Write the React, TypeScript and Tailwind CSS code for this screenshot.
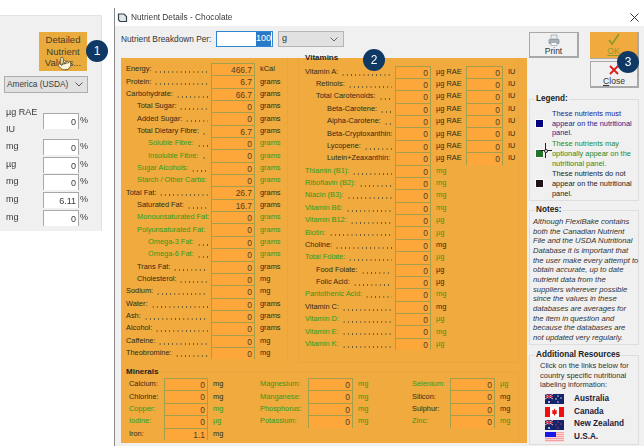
import { Pointer } from "lucide-react";

type Nutrient = { label: string; indent?: 0 | 1 | 2; value?: string; unit: string; green?: boolean };

const MAIN: Nutrient[] = [
  { label: "Energy:", value: "466.7", unit: "kCal" },
  { label: "Protein:", value: "6.7", unit: "grams" },
  { label: "Carbohydrate:", value: "66.7", unit: "grams" },
  { label: "Total Sugar:", indent: 1, unit: "grams" },
  { label: "Added Sugar:", indent: 1, unit: "grams" },
  { label: "Total Dietary Fibre:", indent: 1, value: "6.7", unit: "grams" },
  { label: "Soluble Fibre:", indent: 2, unit: "grams", green: true },
  { label: "Insoluble Fibre:", indent: 2, unit: "grams", green: true },
  { label: "Sugar Alcohols:", indent: 1, unit: "grams", green: true },
  { label: "Starch / Other Carbs:", indent: 1, unit: "grams", green: true },
  { label: "Total Fat:", value: "26.7", unit: "grams" },
  { label: "Saturated Fat:", indent: 1, value: "16.7", unit: "grams" },
  { label: "Monounsaturated Fat:", indent: 1, unit: "grams", green: true },
  { label: "Polyunsaturated Fat:", indent: 1, unit: "grams", green: true },
  { label: "Omega-3 Fat:", indent: 2, unit: "grams", green: true },
  { label: "Omega-6 Fat:", indent: 2, unit: "grams", green: true },
  { label: "Trans Fat:", indent: 1, unit: "grams" },
  { label: "Cholesterol:", indent: 1, unit: "mg" },
  { label: "Sodium:", unit: "mg" },
  { label: "Water:", unit: "grams" },
  { label: "Ash:", unit: "grams" },
  { label: "Alcohol:", unit: "grams" },
  { label: "Caffeine:", unit: "mg" },
  { label: "Theobromine:", unit: "mg" },
];

const VITAMIN_A: Nutrient[] = [
  { label: "Vitamin A:", unit: "µg RAE" },
  { label: "Retinols:", indent: 1, unit: "µg RAE" },
  { label: "Total Carotenoids:", indent: 1, unit: "µg RAE" },
  { label: "Beta-Carotene:", indent: 2, unit: "µg RAE" },
  { label: "Alpha-Carotene:", indent: 2, unit: "µg RAE" },
  { label: "Beta-Cryptoxanthin:", indent: 2, unit: "µg RAE" },
  { label: "Lycopene:", indent: 2, unit: "µg RAE" },
  { label: "Lutein+Zeaxanthin:", indent: 2, unit: "µg RAE" },
];

const VITAMINS: Nutrient[] = [
  { label: "Thiamin (B1):", unit: "mg", green: true },
  { label: "Riboflavin (B2):", unit: "mg", green: true },
  { label: "Niacin (B3):", unit: "mg", green: true },
  { label: "Vitamin B6:", unit: "mg", green: true },
  { label: "Vitamin B12:", unit: "µg", green: true },
  { label: "Biotin:", unit: "µg", green: true },
  { label: "Choline:", unit: "mg" },
  { label: "Total Folate:", unit: "µg", green: true },
  { label: "Food Folate:", indent: 1, unit: "µg" },
  { label: "Folic Acid:", indent: 1, unit: "µg" },
  { label: "Pantothenic Acid:", unit: "mg", green: true },
  { label: "Vitamin C:", unit: "mg" },
  { label: "Vitamin D:", unit: "µg", green: true },
  { label: "Vitamin E:", unit: "mg", green: true },
  { label: "Vitamin K:", unit: "µg", green: true },
];

const MINERALS: Nutrient[][] = [
  [
    { label: "Calcium:", unit: "mg" },
    { label: "Chlorine:", unit: "mg" },
    { label: "Copper:", unit: "mg", green: true },
    { label: "Iodine:", unit: "µg", green: true },
    { label: "Iron:", value: "1.1", unit: "mg" },
  ],
  [
    { label: "Magnesium:", unit: "mg", green: true },
    { label: "Manganese:", unit: "mg", green: true },
    { label: "Phosphorus:", unit: "mg", green: true },
    { label: "Potassium:", unit: "mg", green: true },
  ],
  [
    { label: "Selenium:", unit: "µg", green: true },
    { label: "Silicon:", unit: "mg" },
    { label: "Sulphur:", unit: "mg" },
    { label: "Zinc:", unit: "mg", green: true },
  ],
];

const INDENT = ["", "pl-[11px]", "pl-[22px]"];

function Cell({ value = "0", width }: { value?: string; width: string }) {
  return (
    <div className={`${width} h-full shrink-0 border-x border-t border-[#a39f4a] bg-[#fda63a] pr-[2px] text-right text-[8.4px] leading-[12px] text-[#4a4326]`}>
      {value}
    </div>
  );
}

function Label({ item, width }: { item: Nutrient; width: string }) {
  return (
    <div className={`${width} ${INDENT[item.indent ?? 0]} flex h-full shrink-0 items-center gap-[3px] whitespace-nowrap`}>
      <span className="shrink-0">{item.label}</span>
      {/* dot leader */}
      <span className="mr-[3px] h-full min-w-0 flex-1 bg-[radial-gradient(circle,#4a4428_0.45px,transparent_0.75px)] bg-[length:4.2px_2px] bg-[position:0_8px] bg-repeat-x" />
    </div>
  );
}

function MainRow({ item }: { item: Nutrient }) {
  return (
    <div className={`flex h-[12.35px] items-center ${item.green ? "text-[#2b9d1f]" : "text-[#2e2a18]"}`}>
      <Label item={item} width="w-[85px]" />
      <Cell value={item.value} width="w-[44px]" />
      <span className="pl-[5px]">{item.unit}</span>
    </div>
  );
}

function VitaminRow({ item, iu }: { item: Nutrient; iu?: boolean }) {
  return (
    <div className={`flex h-[12.38px] items-center ${item.green ? "text-[#2b9d1f]" : "text-[#2e2a18]"}`}>
      <Label item={item} width="w-[90px]" />
      <Cell width="w-[36px]" />
      <span className="w-[35px] shrink-0 whitespace-nowrap pl-[5px]">{item.unit}</span>
      {iu && <Cell width="w-[37px]" />}
      {iu && <span className="pl-[5px]">IU</span>}
    </div>
  );
}

function MineralRow({ item, labelWidth, cellWidth }: { item: Nutrient; labelWidth: string; cellWidth: string }) {
  return (
    <div className={`flex h-[12.4px] items-center ${item.green ? "text-[#2b9d1f]" : "text-[#2e2a18]"}`}>
      <span className={`${labelWidth} shrink-0`}>{item.label}</span>
      <Cell value={item.value} width={cellWidth} />
      <span className="pl-[5px]">{item.unit}</span>
    </div>
  );
}

function LeftPanel() {
  const rows = ["mg", "µg", "mg", "mg", "mg"];
  const Input = ({ v = "0" }: { v?: string }) => (
    <div className="h-[16px] w-[36px] border-x border-t border-[#a8a8a8] bg-white pr-[2px] text-right leading-[16px]">{v}</div>
  );
  return (
    <div className="w-[114px] shrink-0 bg-white pt-[15px]">
      <div className="h-[216px] w-[102px] border-t border-r border-[#e3e3e3] bg-[#f0f0f0] text-[9px] text-[#3a3a3a]">
        <div className="ml-[39px] mt-[16px] flex h-[39px] w-[48px] flex-col items-center justify-center bg-[#e9ab3c] text-[9.5px] leading-[11.7px] text-[#44402c]">
          <span>Detailed</span>
          <span>Nutrient</span>
          <span>Values...</span>
        </div>
        <div className="ml-[4px] mt-[5px] flex h-[17px] w-[84px] items-center justify-between border border-[#adadad] bg-[#e1e1e1] pl-[2px] pr-[4px] text-[8.3px]">
          <span className="whitespace-nowrap">America (USDA)</span>
          <svg width="8" height="5" viewBox="0 0 8 5" className="text-[#555]"><path d="M0.5 0.5L4 4L7.5 0.5" fill="none" stroke="currentColor" /></svg>
        </div>
        <div className="mt-[10px] flex h-[35px] items-center">
          <div className="w-[43px] pl-[6px] leading-[17px]">
            <div className="whitespace-nowrap">µg RAE</div>
            <div>IU</div>
          </div>
          <Input />
          <span className="pl-[1px]">%</span>
        </div>
        {rows.map((u, i) => (
          <div key={i} className="flex h-[17.7px] items-center">
            <span className="w-[43px] pl-[6px]">{u}</span>
            <Input v={i === 3 ? "6.11" : "0"} />
            <span className="pl-[1px]">%</span>
          </div>
        ))}
      </div>
    </div>
  );
}

function Group({ title, children, className }: { title: string; children: React.ReactNode; className: string }) {
  return (
    <div className={`relative border border-[#dedede] ${className}`}>
      <span className="absolute -top-[6px] left-[5px] bg-[#f0f0f0] px-[1px] text-[8.2px] font-bold leading-[10px] text-[#222]">{title}</span>
      {children}
    </div>
  );
}

function Flag({ kind }: { kind: "au" | "ca" | "nz" | "us" }) {
  if (kind === "ca") {
    return (
      <svg width="19" height="10" viewBox="0 0 19 10">
        <rect width="19" height="10" fill="#fff" />
        <rect width="5" height="10" fill="#f01010" />
        <rect x="14" width="5" height="10" fill="#f01010" />
        <path d="M9.5 1.5L10.5 3.5L12 3L11.5 5.5L12.5 6L10 7.5L10 8.5L9 8.5L9 7.5L6.5 6L7.5 5.5L7 3L8.5 3.5Z" fill="#f01010" />
      </svg>
    );
  }
  if (kind === "us") {
    return (
      <svg width="19" height="10" viewBox="0 0 19 10">
        <rect width="19" height="10" fill="#f4a0a0" />
        <path d="M0 1.5H19M0 3.5H19M0 5.5H19M0 7.5H19M0 9.5H19" stroke="#fbe3e3" strokeWidth="0.8" />
        <rect width="11" height="5" fill="#1a1ae8" />
      </svg>
    );
  }
  const star = kind === "nz" ? "#e04040" : "#fff";
  return (
    <svg width="19" height="10" viewBox="0 0 19 10">
      <rect width="19" height="10" fill="#12246e" />
      <path d="M0 0L8 5M8 0L0 5" stroke="#e8b8c0" strokeWidth="1" />
      <path d="M4 0V5M0 2.5H8" stroke="#d8384a" strokeWidth="1.2" />
      <circle cx="13" cy="2" r="0.7" fill={star} />
      <circle cx="16" cy="4" r="0.7" fill={star} />
      <circle cx="13" cy="8" r="0.7" fill={star} />
      <circle cx="11" cy="5" r="0.7" fill={star} />
      <circle cx="4" cy="8" r="0.9" fill="#fff" />
    </svg>
  );
}

function Sidebar() {
  const legend = [
    { color: "bg-[#00007f]", text: "text-[#23238e]", lines: ["These nutrients must", "appear on the nutritional", "panel."] },
    { color: "bg-[#24742a]", text: "text-[#1f8a24]", lines: ["These nutrients may", "optionally appear on the", "nutritional panel."] },
    { color: "bg-[#1d1414]", text: "text-[#222]", lines: ["These nutrients do not", "appear on the nutritional", "panel."] },
  ];
  const notes = [
    "Although FlexiBake contains",
    "both the Canadian Nutrient",
    "File and the USDA Nutritional",
    "Database it is important that",
    "the user make every attempt to",
    "obtain accurate, up to date",
    "nutrient data from the",
    "suppliers wherever possible",
    "since the values in these",
    "databases are averages for",
    "the item in question and",
    "because the databases are",
    "not updated very regularly.",
  ];
  const flags = [
    { kind: "au" as const, name: "Australia" },
    { kind: "ca" as const, name: "Canada" },
    { kind: "nz" as const, name: "New Zealand" },
    { kind: "us" as const, name: "U.S.A." },
  ];
  return (
    <div className="w-[110px] shrink-0 text-[#333]">
      <div className="flex justify-between">
        <div className="flex h-[26px] w-[50px] flex-col items-center border border-b-2 border-r-2 border-[#a8a8a8] bg-[#f0f0f0] text-[8.5px] leading-[10px]">
          <svg width="12" height="12" viewBox="0 0 12 12" className="mt-[1px]">
            <path d="M3 1H9V5H3Z" fill="#e8eef2" stroke="#8a949c" strokeWidth="0.6" />
            <path d="M1 5.5H11V9.5H1Z" fill="#a6b0b8" stroke="#7a848c" strokeWidth="0.6" />
            <path d="M3 8.5H9V11.5H3Z" fill="#f6f8fa" stroke="#8a949c" strokeWidth="0.6" />
          </svg>
          <span>Print</span>
        </div>
        <div className="flex h-[27px] w-[49px] flex-col items-center border-r-2 border-b border-[#a8a8a8] bg-[#f0aa3d] text-[8.5px] leading-[10px] text-[#8e9a30]">
          <svg width="14" height="13" viewBox="0 0 14 13" className="mt-[1px]"><path d="M2 7L5 11L12 1" fill="none" stroke="#8e9a30" strokeWidth="1.8" /></svg>
          <span className="underline">OK</span>
        </div>
      </div>
      <div className="ml-[61px] mt-[2px] flex h-[27px] w-[49px] flex-col items-center border border-b-2 border-r-2 border-[#a8a8a8] text-[8.6px] leading-[10px]">
        <svg width="12" height="12" viewBox="0 0 12 12" className="mt-[2px]"><path d="M2 2L10 10M10 2L2 10" fill="none" stroke="#e01818" strokeWidth="1.8" /></svg>
        <span><span className="underline">C</span>lose</span>
      </div>

      <Group title="Legend:" className="mt-[11px] h-[102px] pl-[5px] pt-[9px]">
        <div className="flex flex-col gap-[1px]">
          {legend.map((l, i) => (
            <div key={i} className="flex items-center gap-[8px]">
              <span className={`h-[9px] w-[9px] shrink-0 border border-white ${l.color}`} />
              <div className={`whitespace-nowrap text-[7.4px] leading-[9.7px] ${l.text}`}>
                {l.lines.map((t) => <div key={t}>{t}</div>)}
              </div>
            </div>
          ))}
        </div>
        {/* mouse crosshair over the legend */}
        <span className="absolute left-[15px] top-[43px] h-[15px] w-[1px] bg-[#222]" />
        <span className="absolute left-[10px] top-[50px] h-[1px] w-[12px] bg-[#222]" />
        <span className="absolute left-[13.5px] top-[48.5px] h-[4px] w-[4px] rounded-full border border-[#222] bg-white" />
      </Group>

      <Group title="Notes:" className="mt-[9px] h-[135px] pl-[3px] pt-[6px]">
        <div className="whitespace-nowrap text-[7.65px] italic leading-[9.65px]">
          {notes.map((t) => <div key={t}>{t}</div>)}
        </div>
      </Group>

      <Group title="Additional Resources" className="mt-[10px] h-[90px] pt-[5px]">
        <div className="whitespace-nowrap pl-[10px] text-[7.5px] leading-[9.7px]">
          <div>Click on the links below for</div>
          <div>country specific nutritional</div>
          <div>labeling information:</div>
        </div>
        <div className="mt-[2.5px] flex flex-col">
          {flags.map((f) => (
            <div key={f.name} className="flex h-[12.8px] items-center gap-[10px] pl-[15px] text-[8.2px] font-bold text-[#1c1c3c]">
              <Flag kind={f.kind} />
              <span>{f.name}</span>
            </div>
          ))}
        </div>
      </Group>
    </div>
  );
}

function Dialog() {
  return (
    <div className="mt-[8px] flex w-[530px] shrink-0 flex-col border-l border-[#8a8a8a]">
      <div className="flex h-[18px] shrink-0 items-center bg-white pl-[2px] pr-[5px] text-[8.3px] text-[#3a3a3a]">
        <svg width="11" height="11" viewBox="0 0 11 11">
          <path d="M1.5 2H7L9.5 4.5V9.5H3L1.5 8Z" fill="#dfe6e6" stroke="#33424a" strokeWidth="1.2" />
        </svg>
        <span className="ml-[3px]">Nutrient Details - Chocolate</span>
        <svg width="9" height="9" viewBox="0 0 9 9" className="ml-auto"><path d="M0.5 0.5L8.5 8.5M8.5 0.5L0.5 8.5" stroke="#333" /></svg>
      </div>
      <div className="flex flex-1 bg-[#f0f0f0] pl-[6px]">
        <div className="w-[406px] shrink-0 pt-[5px]">
          <div className="flex h-[16px] items-center text-[8.3px] text-[#333]">
            <span className="w-[95px] whitespace-nowrap">Nutrient Breakdown Per:</span>
            <div className="flex h-[16px] w-[57px] items-center justify-end border border-[#2f86d4] bg-white pr-[1px] text-[9px]">
              <span className="bg-[#2a78c8] text-white">100</span>
            </div>
            <div className="ml-[5px] flex h-[16px] w-[66px] items-center justify-between border border-[#b5b5b5] bg-[#e1e1e1] pl-[3px] pr-[5px] text-[9px]">
              <span>g</span>
              <svg width="8" height="5" viewBox="0 0 8 5"><path d="M0.5 0.5L4 4L7.5 0.5" fill="none" stroke="#666" /></svg>
            </div>
          </div>

          <div className="relative mt-[11px] h-[385px] bg-[#f0aa3d] text-[7.4px] leading-[10px]">
            <div className="flex h-[305px]">
              <div className="h-full w-[167px] border-r border-[#e9a63f] pl-[5px] pt-[5px]">
                {MAIN.map((m) => <MainRow key={m.label} item={m} />)}
              </div>
              <div className="relative ml-[10px] h-full w-[221px] border-x border-b border-[#e9a63f] pl-[6px] pt-[7.5px]">
                <span className="absolute -top-[5px] left-[6px] text-[8px] font-bold leading-[10px] text-[#222]">Vitamins</span>
                {VITAMIN_A.map((m) => <VitaminRow key={m.label} item={m} iu />)}
                {VITAMINS.map((m) => <VitaminRow key={m.label} item={m} />)}
              </div>
            </div>
            <div className="relative mt-[9px] flex h-[71px] w-[398px] border-t border-r border-[#e9a63f] pt-[5px]">
              <span className="absolute -top-[6px] left-[5px] text-[8px] font-bold leading-[10px] text-[#222]">Minerals</span>
              <div className="w-[139px] pl-[8px]">
                {MINERALS[0].map((m) => <MineralRow key={m.label} item={m} labelWidth="w-[35px]" cellWidth="w-[44px]" />)}
              </div>
              <div className="w-[152px]">
                {MINERALS[1].map((m) => <MineralRow key={m.label} item={m} labelWidth="w-[48px]" cellWidth="w-[45px]" />)}
              </div>
              <div>
                {MINERALS[2].map((m) => <MineralRow key={m.label} item={m} labelWidth="w-[38px]" cellWidth="w-[45px]" />)}
              </div>
            </div>
          </div>
        </div>
        <div className="ml-[2px] pt-[6px]">
          <Sidebar />
        </div>
      </div>
    </div>
  );
}

function Badge({ n, className }: { n: number; className: string }) {
  return (
    <div className={`absolute flex h-[22px] w-[22px] items-center justify-center rounded-full bg-[#0f3864] text-[12px] text-white ${className}`}>
      {n}
    </div>
  );
}

export default function App() {
  return (
    <div className="relative h-[446px] w-[644px] overflow-hidden bg-white font-['Liberation_Sans',Arial,sans-serif]">
      <div className="flex h-full blur-[0.35px]">
        <LeftPanel />
        <Dialog />
      </div>
      <Pointer className="absolute left-[57px] top-[56px] h-[15px] w-[15px] fill-[#fff3d8] text-[#6a5a30]" strokeWidth={1.5} />
      <Badge n={1} className="left-[86px] top-[40px]" />
      <Badge n={2} className="left-[363px] top-[49px]" />
      <Badge n={3} className="left-[617px] top-[51px]" />
    </div>
  );
}
